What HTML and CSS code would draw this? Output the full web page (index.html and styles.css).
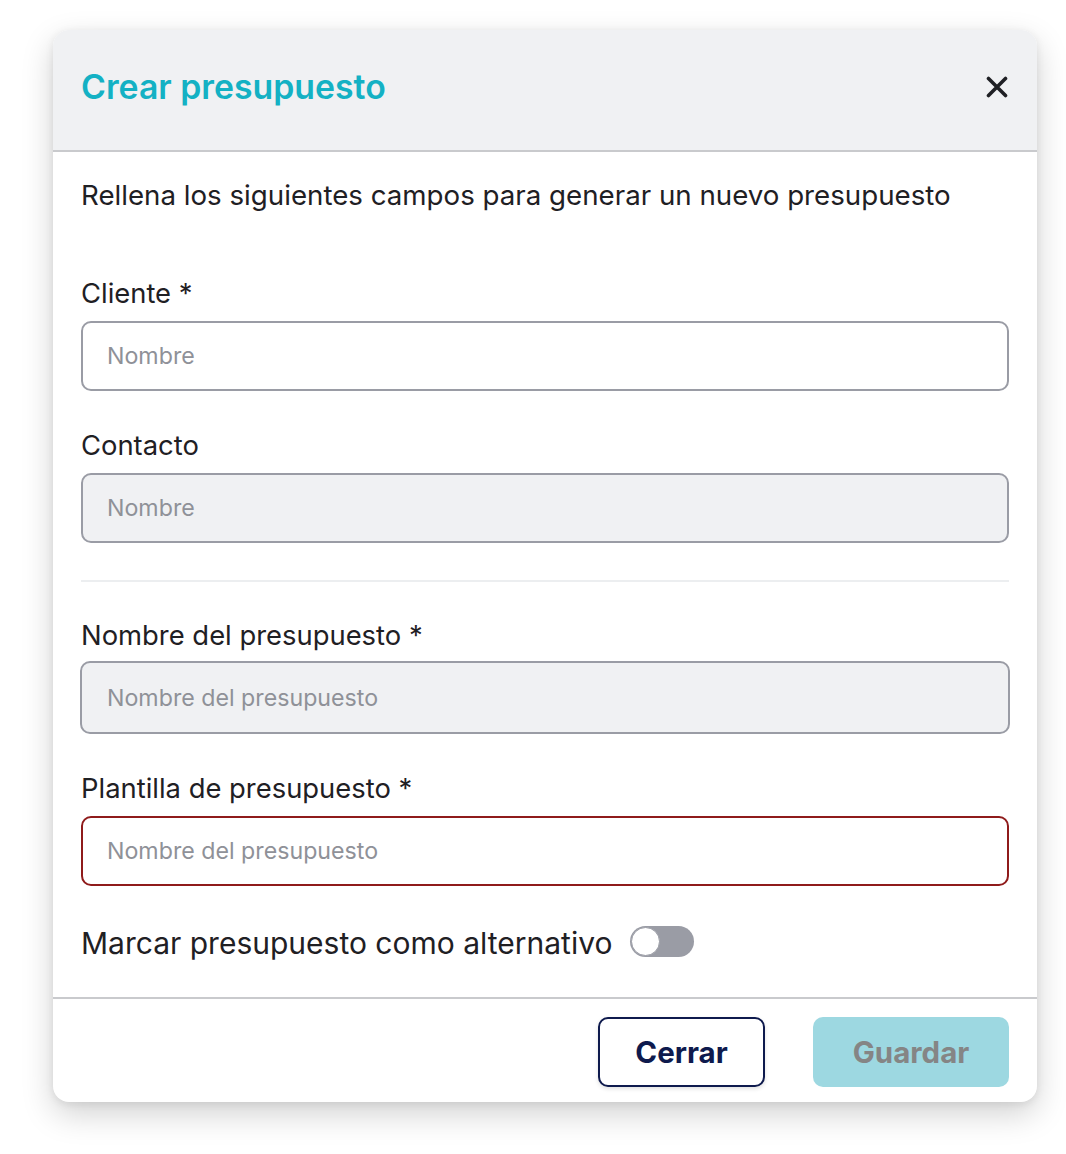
FILE: index.html
```html
<!DOCTYPE html>
<html lang="es">
<head>
<meta charset="utf-8">
<title>Crear presupuesto</title>
<link rel="stylesheet" href="styles.css">
</head>
<body>
<div class="page">
  <div class="modal">
    <div class="modal-header">
      <h2 class="modal-title">Crear presupuesto</h2>
      <button class="close-btn" aria-label="Cerrar">
        <svg width="22" height="22" viewBox="0 0 22 22"><path d="M2.5 2.5 L19.5 19.5 M19.5 2.5 L2.5 19.5" stroke="#1f2024" stroke-width="3.6" stroke-linecap="round"/></svg>
      </button>
    </div>
    <div class="modal-body">
      <p class="intro">Rellena los siguientes campos para generar un nuevo presupuesto</p>

      <div class="field first">
        <label class="label">Cliente *</label>
        <input class="input" placeholder="Nombre">
      </div>
      <div class="field">
        <label class="label">Contacto</label>
        <input class="input disabled" placeholder="Nombre" disabled>
      </div>

      <hr class="divider">

      <div class="field after-divider">
        <label class="label">Nombre del presupuesto *</label>
        <input class="input disabled wide" placeholder="Nombre del presupuesto">
      </div>
      <div class="field">
        <label class="label">Plantilla de presupuesto *</label>
        <input class="input error" placeholder="Nombre del presupuesto">
      </div>

      <div class="toggle-row">
        <span class="toggle-label">Marcar presupuesto como alternativo</span>
        <span class="toggle"><span class="knob"></span></span>
      </div>
    </div>
    <div class="modal-footer">
      <button class="btn btn-outline">Cerrar</button>
      <button class="btn btn-primary" disabled>Guardar</button>
    </div>
  </div>
</div>
</body>
</html>
```

FILE: styles.css
```css
* { box-sizing: border-box; }
html, body {
  margin: 0;
  padding: 0;
  background: #ffffff;
  font-family: "Inter", "Noto Sans", "Liberation Sans", sans-serif;
  color: #1f2024;
}
.page {
  padding: 30px 29px 52px 53px;
}
.modal {
  width: 984px;
  height: 1072px;
  background: #ffffff;
  border-radius: 16px;
  overflow: hidden;
  box-shadow: 0 12px 32px rgba(0, 0, 0, 0.18), 0 2px 8px rgba(0, 0, 0, 0.08);
  display: flex;
  flex-direction: column;
}
.modal-header {
  height: 122px;
  background: #f0f1f3;
  border-bottom: 2px solid #c9cacd;
  display: flex;
  align-items: center;
  justify-content: space-between;
  padding: 0 28px 6px 28px;
}
.modal-title {
  margin: 0;
  font-size: 33.8px;
  font-weight: 600;
  color: #14b1c4;
  line-height: 40px;
}
.close-btn {
  border: 0;
  background: transparent;
  padding: 0;
  width: 22px;
  height: 22px;
  display: flex;
  margin-right: 1px;
}
.modal-body {
  padding: 25px 28px 0 28px;
  flex: 1;
}
.intro {
  margin: 0;
  font-size: 27.7px;
  line-height: 36px;
  color: #1f2024;
}
.field {
  display: flex;
  flex-direction: column;
  margin-top: 36px;
}
.field.first { margin-top: 62px; }
.field.after-divider { margin-top: 35px; }
.label {
  font-size: 27.4px;
  line-height: 36px;
  margin-bottom: 10px;
  color: #1f2024;
}
.after-divider .label { margin-bottom: 8px; }
.input {
  height: 70px;
  border: 2px solid #9a9ca5;
  border-radius: 10px;
  padding: 0 24px;
  font-family: inherit;
  font-size: 23.2px;
  background: #ffffff;
  color: #1f2024;
  outline: none;
}
.input::placeholder { color: #8f9198; }
.input.disabled { background: #f0f1f3; }
.input.wide { height: 73px; margin: 0 -1px; padding: 0 25px; }
.input.error { border-color: #8f1b1b; }
.divider {
  border: 0;
  height: 2px;
  background: #eceef0;
  margin: 37px 0 0 0;
}
.toggle-row {
  display: flex;
  align-items: center;
  margin-top: 39px;
  height: 36px;
}
.toggle-label {
  font-size: 30px;
  line-height: 36px;
}
.toggle {
  position: relative;
  width: 64px;
  height: 31px;
  background: #9a9ca5;
  border-radius: 16px;
  margin-left: 18px;
  margin-bottom: 3px;
}
.knob {
  position: absolute;
  left: 1px;
  top: 1px;
  width: 29px;
  height: 29px;
  border-radius: 50%;
  background: #ffffff;
  border: 1px solid #9a9ca5;
}
.modal-footer {
  border-top: 2px solid #c9cacd;
  display: flex;
  justify-content: flex-end;
  gap: 48px;
  padding: 18px 28px 15px 28px;
}
.btn {
  height: 70px;
  border-radius: 10px;
  font-family: inherit;
  font-size: 29.5px;
  font-weight: 700;
}
.btn-outline {
  width: 167px;
  background: #ffffff;
  border: 2px solid #0e1a4d;
  color: #0e1a4d;
  box-shadow: 0 2px 4px rgba(0, 0, 0, 0.12);
}
.btn-primary {
  width: 196px;
  background: #9dd8e1;
  border: 0;
  color: #858585;
}
```
